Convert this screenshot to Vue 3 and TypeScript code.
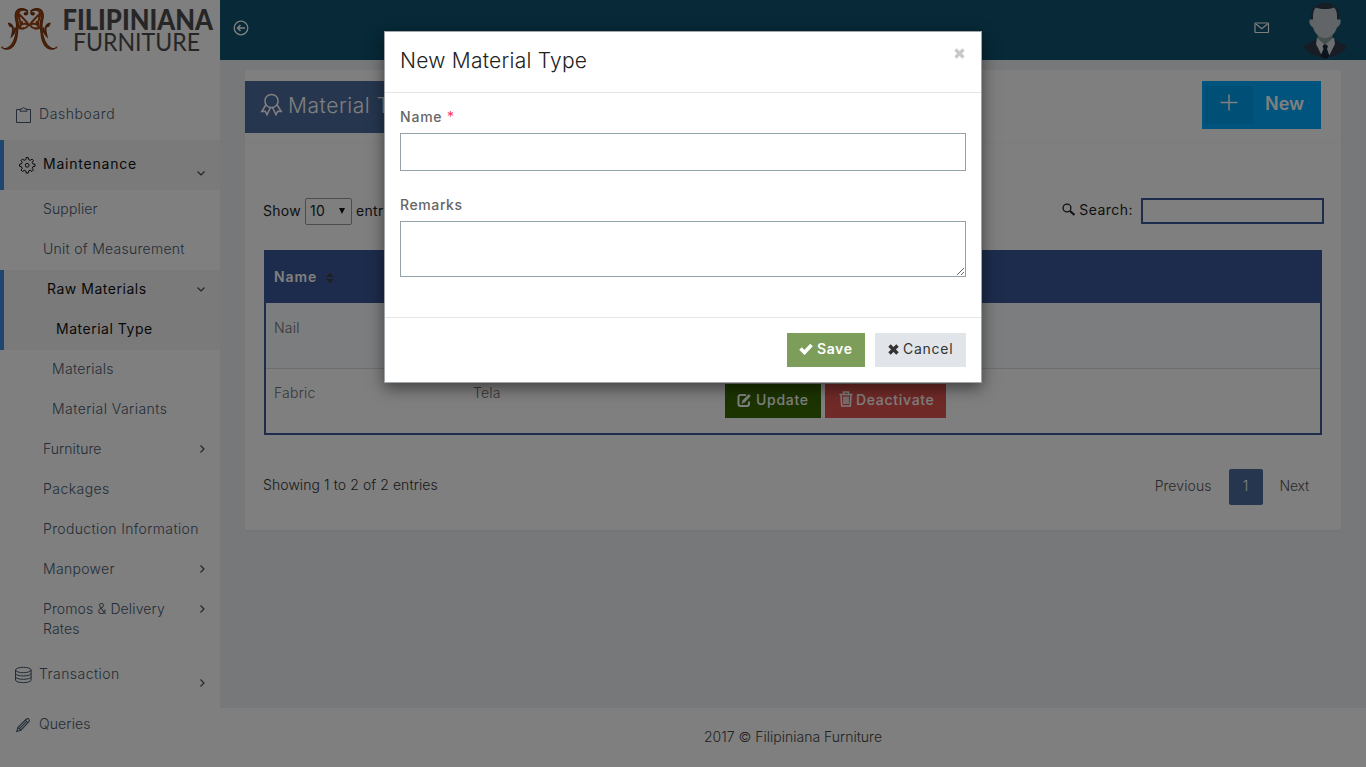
<script setup lang="ts">
interface NavItem {
  label: string
  kind: 'top' | 'sub' | 'deep'
  active?: boolean
  arrow?: 'down' | 'right'
  icon?: 'clipboard' | 'gear' | 'stack' | 'pencil'
  tracking: number
}

const nav: NavItem[] = [
  { label: 'Dashboard', kind: 'top', icon: 'clipboard', tracking: 0.57 },
  { label: 'Maintenance', kind: 'top', icon: 'gear', active: true, arrow: 'down', tracking: 0.78 },
  { label: 'Supplier', kind: 'sub', tracking: 0.14 },
  { label: 'Unit of Measurement', kind: 'sub', tracking: 0.27 },
  { label: 'Raw Materials', kind: 'sub', active: true, arrow: 'down', tracking: 0.52 },
  { label: 'Material Type', kind: 'deep', active: true, tracking: 0.52 },
  { label: 'Materials', kind: 'deep', tracking: 0.3 },
  { label: 'Material Variants', kind: 'deep', tracking: 0.44 },
  { label: 'Furniture', kind: 'sub', arrow: 'right', tracking: 0.05 },
  { label: 'Packages', kind: 'sub', tracking: 0.45 },
  { label: 'Production Information', kind: 'sub', tracking: 0.35 },
  { label: 'Manpower', kind: 'sub', arrow: 'right', tracking: 0.3 },
  { label: 'Promos & Delivery Rates', kind: 'sub', arrow: 'right', tracking: 0.13 },
  { label: 'Transaction', kind: 'top', icon: 'stack', arrow: 'right', tracking: 0.45 },
  { label: 'Queries', kind: 'top', icon: 'pencil', tracking: 0.12 },
]
</script>

<template>
  <div class="page">
    <aside class="sidebar">
      <svg class="logo" width="220" height="60" viewBox="0 0 220 60">
        <defs>
          <g id="scroll">
            <path d="M28 11C24 7 17 8 15.500 13c-1.500 4 1 8 1 12 0 8-1.500 15-5 19.500C9 47.500 6 49 3 48.500 9 51 14 47 16 41c2-6 1.500-12 2.500-16 .5-3-2.500-7-1-11 1.500-4 6.500-5 10.500-3z" fill="#a84a12" stroke="#7a340c" stroke-width="1.100" />
            <path d="M8 23.500c3 .5 5 3 5 6 0 2-.5 4-1 6 2-2 3.500-5 3-8 M12.500 27c-1-1-2.500-1.500-3.500-1" fill="none" stroke="#7a3510" stroke-width="1.800" />
            <path d="M19 12c-2 5 2 8 1.500 12M20 15c3 3 6 6 8.500 9.500-3-1-6-1-8 1-1.500 2 1 4 3 2.500M18 27c3 3 8 2 10.500-2M22 22l-2 4" fill="none" stroke="#9c4310" stroke-width="2" stroke-linecap="round" />
            <path d="M22 9.500c4 0 6 2 5.500 4-1 1.500-3 1-3-.5" fill="none" stroke="#7a3510" stroke-width="1.500" />
            <circle cx="25.500" cy="13.800" r="1.800" fill="#7a3510" />
            <circle cx="2.300" cy="47.500" r="1.100" fill="#9c4310" />
          </g>
        </defs>
        <use href="#scroll" />
        <use href="#scroll" transform="translate(58.500 0) scale(-1 1)" />
        <text class="logo-bold" x="62.500" y="30" textLength="150.500" lengthAdjust="spacingAndGlyphs">FILIPINIANA</text>
        <text class="logo-thin" x="73" y="51.300" textLength="127" lengthAdjust="spacingAndGlyphs">FURNITURE</text>
      </svg>

      <nav class="menu">
        <div v-for="item in nav" :key="item.label" class="item" :class="[item.kind, { active: item.active }]">
          <svg v-if="item.icon" class="item-icon" width="18" height="18" viewBox="0 0 18 18" fill="none" stroke="currentColor">
            <template v-if="item.icon === 'clipboard'">
              <path d="M5 3.500H1.500v13h14v-13h-3.500M5 5.200V3h1.900c.3-1.800 2.900-1.800 3.200 0H12v2.200z" />
            </template>
            <template v-else-if="item.icon === 'gear'">
              <path d="M7.200 1.500h2l.4 2.100 1.600.7 1.800-1.200 1.400 1.400-1.200 1.800.7 1.600 2.100.4v2l-2.100.4-.7 1.600 1.200 1.800-1.400 1.400-1.800-1.200-1.600.7-.4 2.100h-2l-.4-2.100-1.600-.7-1.800 1.200L2 14.100l1.200-1.800-.7-1.600-2.100-.4v-2l2.100-.4.7-1.600L2 4.500l1.400-1.400 1.800 1.200 1.600-.7z" />
              <circle cx="8.200" cy="9.300" r="1.900" />
            </template>
            <template v-else-if="item.icon === 'stack'">
              <ellipse cx="8.300" cy="4" rx="7.800" ry="2.700" />
              <path d="M.5 4v10c0 3.500 15.600 3.500 15.600 0V4M.5 7.300c0 3.500 15.600 3.500 15.600 0M.5 10.700c0 3.500 15.600 3.500 15.600 0" />
            </template>
            <template v-else>
              <path d="M1.800 15.500l1.200-4.200L11.500 3c1.500-1.200 3.700.8 2.600 2.500L5.900 14.200zM3 11.300l2.900 2.900M10.300 4.200l2.700 2.700M4.800 12.400l6.200-6.300" stroke-width="1.100" />
            </template>
          </svg>
          <span class="label" :style="{ letterSpacing: item.tracking + 'px' }">{{ item.label }}</span>
          <svg v-if="item.arrow" class="arrow" width="10" height="10" viewBox="0 0 10 10" fill="none" stroke="currentColor" stroke-width="1.100">
            <path :d="item.arrow === 'down' ? 'M1.500 3.500L5 7l3.500-3.500' : 'M3.500 1.500L7 5 3.500 8.500'" />
          </svg>
        </div>
      </nav>
    </aside>

    <div class="main">
      <header class="topbar">
        <svg class="back" width="16" height="16" viewBox="0 0 16 16" fill="none" stroke="#fff" stroke-width="1.300">
          <circle cx="8" cy="8" r="6.800" />
          <path d="M12 8H4.500M7.500 5L4.500 8l3 3" stroke-width="1.600" />
        </svg>
        <svg class="mail" width="16" height="12" viewBox="0 0 16 12" fill="none" stroke="#fff" stroke-width="1.200">
          <rect x="1" y="1" width="13.500" height="9.500" rx=".5" />
          <path d="M2 2l5.700 4.700L13.500 2" />
        </svg>
        <svg class="avatar" width="46" height="56" viewBox="0 0 46 56">
          <path d="M1 43.500l14-7.500h16l14 7.500C36 58 11 58 1 43.500z" fill="#303a4b" />
          <path d="M15 35l-1 6 7 14h5l7-14-1-6z" fill="#d9dde0" />
          <path d="M15.500 31h15v4.500L23 42l-7.500-6.500z" fill="#8f9c9c" />
          <path d="M20.500 43l2.500-2 3 2-1 3 2.500 7-2 2.500h-4.500l-2.500-2.500L21.500 46z" fill="#1b2738" />
          <path d="M9 17C7 6 14 0 23 0s16 6 14 17l-4 3H13z" fill="#303a4b" />
          <path d="M11 13c0-4 1-6.500 3-8.500 5 2 13 2 18 0 2 2 3 4.500 3 8.500v3.500h3.500c.7 3-.5 6.500-3.500 8C33 31 28 35 23 35S13 31 11 24.500c-3-1.500-4.200-5-3.500-8H11z" fill="#c4cbcf" />
        </svg>
      </header>

      <section class="panel">
        <div class="panel-head">
          <h1 class="title">
            <svg width="24" height="24" viewBox="0 0 24 24" fill="none" stroke="currentColor" stroke-width="1.500">
              <circle cx="11.500" cy="8" r="6.600" />
              <path d="M5.800 12L1.800 18.500l3.500-.3L7 21.700l3.500-7.200M17.200 12l4 6.500-3.500-.3-1.700 3.500-3.500-7.200" />
            </svg>
            <span>Material Type</span>
          </h1>
          <button class="new" type="button">
            <span class="plus">
              <svg width="18" height="18" viewBox="0 0 18 18" stroke="#fff" stroke-width="1.500"><path d="M9 .5v16M.5 8.500h17" /></svg>
            </span>
            <span class="new-text">New</span>
          </button>
        </div>

        <div class="tools">
          <div class="length">
            <span>Show</span>
            <span class="select"><span>10</span><i></i></span>
            <span>entries</span>
          </div>
          <div class="search">
            <svg width="14" height="14" viewBox="0 0 14 14" fill="none" stroke="#222">
              <circle cx="5" cy="5" r="3.900" stroke-width="1.300" />
              <path d="M8 8l4.500 4" stroke-width="2.200" />
            </svg>
            <span>Search:</span>
            <span class="search-box"></span>
          </div>
        </div>

        <div class="table">
          <div class="row thead">
            <span>Name<svg class="sort" width="10" height="12" viewBox="0 0 10 12" fill="#3c4048"><path d="M1 5l4-4.500L9 5zM1 7l4 4.500L9 7z" /></svg></span>
            <span>Remarks</span>
            <span>Actions</span>
          </div>
          <div class="row odd"><span>Nail</span><span></span><span></span></div>
          <div class="row">
            <span>Fabric</span>
            <span>Tela</span>
            <span class="actions">
              <button class="btn update" type="button">
                <svg width="15" height="15" viewBox="0 0 15 15" fill="none" stroke="currentColor"><path d="M9 2H3.500Q1.500 2 1.500 4v7q0 2 2 2h6.500q2 0 2-2V8.500" stroke-width="2" /><path d="M6 9l6.800-7" stroke-width="3" /><path d="M4.500 10.700l.6-2.500 2 1.900z" fill="currentColor" stroke="none" /></svg>
                <span>Update</span>
              </button>
              <button class="btn deactivate" type="button">
                <svg width="14" height="16" viewBox="0 0 14 16" fill="none" stroke="currentColor" stroke-width="1.500"><path d="M.5 3.500h13M4.500 3V1h5v2M2 4l.7 11h8.600L12 4M5 5.500v7.500M7 5.500v7.500M9 5.500v7.500" /></svg>
                <span>Deactivate</span>
              </button>
            </span>
          </div>
        </div>

        <div class="bottom">
          <span class="info">Showing 1 to 2 of 2 entries</span>
          <div class="pager"><span class="prev">Previous</span><b>1</b><span class="next">Next</span></div>
        </div>
      </section>

      <footer class="footer"><span>2017 © Filipiniana Furniture</span></footer>
    </div>
  </div>

  <div class="backdrop">
    <div class="modal" role="dialog">
      <div class="modal-head">
        <h2>New Material Type</h2>
        <svg width="11" height="11" viewBox="0 0 11 11" stroke="#c9c9c9" stroke-width="3.300"><path d="M1.500 1.500l8 8M9.500 1.500l-8 8" /></svg>
      </div>
      <div class="modal-body">
        <label class="name-label">Name <em>*</em></label>
        <input type="text" />
        <label class="remarks-label">Remarks</label>
        <textarea></textarea>
      </div>
      <div class="modal-foot">
        <button class="btn save" type="button">
          <svg width="14" height="12" viewBox="0 0 14 12" fill="none" stroke="#fff" stroke-width="3.600"><path d="M1.500 5.500l4 4L12.500 2" /></svg>
          <span>Save</span>
        </button>
        <button class="btn cancel" type="button">
          <svg width="11" height="11" viewBox="0 0 11 11" stroke="#333" stroke-width="3.400"><path d="M1.500 1.500l8 8M9.500 1.500l-8 8" /></svg>
          <span>Cancel</span>
        </button>
      </div>
    </div>
  </div>
</template>

<style>
body {
  margin: 0;
  overflow: hidden;
}
</style>

<style scoped>
.page,
.backdrop {
  font-family: Inter, "Open Sans", sans-serif;
  font-size: 14px;
  line-height: 20px;
}
.page {
  display: flex;
  height: 767px;
  background: #eef1f5;
}
button {
  font: inherit;
  border: 0;
}
svg {
  flex: none;
}
.sidebar {
  width: 220px;
  flex: none;
  background: #fff;
}
.logo {
  display: block;
}
.logo text {
  font-family: Lato, sans-serif;
  fill: #4c4c4e;
}
.logo .logo-bold {
  font-weight: 900;
  font-size: 28px;
}
.logo .logo-thin {
  font-weight: 400;
  font-size: 25px;
}
.menu {
  padding-top: 30px;
}
.item {
  box-sizing: border-box;
  position: relative;
  display: flex;
  min-height: 40px;
  padding: 9px 46px 11px 43px;
  color: #485a6e;
  font-weight: 300;
}
.item.top {
  height: 50px;
  padding: 14px 15px;
}
.item.deep {
  padding-left: 52px;
}
.item.sub .label {
  width: 158px;
  flex: none;
}
.item.top .label {
  margin-left: 6px;
}
.item.active {
  background: #f5f5f5;
  border-left: 4px solid #3c8cdc;
  color: #111;
  font-weight: 400;
}
.item-icon {
  margin-top: 2px;
}
.arrow {
  position: absolute;
  right: 13px;
  top: 15px;
  color: #444;
}
.active .arrow {
  right: 14.5px;
}
.item.top .arrow {
  top: 28px;
}
.item.sub .arrow {
  top: 14px;
}
.main {
  flex: 1;
  display: flex;
  flex-direction: column;
}
.topbar {
  box-sizing: border-box;
  height: 60px;
  display: flex;
  align-items: center;
  padding: 0 18px 0 13px;
  background: #0e5271;
}
.back {
  margin-top: -4px;
}
.mail {
  margin: -4px 32px 0 auto;
}
.avatar {
  margin-top: 2px;
}
.panel {
  box-sizing: border-box;
  height: 460px;
  margin: 10px 25px 0;
  background: #fff;
  box-shadow: 0 1px 2px #dfe3e8;
}
.panel-head {
  box-sizing: border-box;
  height: 73px;
  padding: 11px 20px 0 0;
  display: flex;
  justify-content: space-between;
  align-items: flex-start;
  border-bottom: 1px solid #f9f9fa;
}
.title {
  box-sizing: border-box;
  height: 52px;
  margin: 0;
  padding: 0 15px;
  display: flex;
  gap: 4px;
  align-items: center;
  background: #4b6d9c;
  color: #fff;
  font-size: 21px;
  font-weight: 300;
  letter-spacing: 0.55px;
}
.title svg {
  margin-top: -5px;
}
.title span {
  margin-top: -3px;
}
.new {
  width: 119px;
  height: 48px;
  padding: 5px 3px;
  display: flex;
  background: #00a8fc;
  color: #fff;
}
.plus {
  width: 48px;
  height: 38px;
  display: flex;
  align-items: center;
  justify-content: center;
  background: #009fee;
}
.plus svg {
  margin-top: -5px;
}
.new-text {
  margin: 8px 0 0 12px;
  font-size: 18px;
  font-weight: 600;
}
.tools {
  display: flex;
  justify-content: space-between;
  padding: 54px 17px 0 18px;
  height: 28px;
  color: #222;
}
.length,
.search {
  display: flex;
  align-items: center;
  letter-spacing: 0.3px;
}
.search {
  margin-top: -1px;
  height: 28px;
  letter-spacing: 0.45px;
}
.length {
  gap: 4px;
}
.select {
  box-sizing: border-box;
  width: 47px;
  height: 27px;
  display: flex;
  align-items: center;
  justify-content: space-between;
  padding: 0 6px 0 4px;
  border: 1px solid #999;
  border-radius: 2px;
}
.select i {
  border: 3.5px solid transparent;
  border-top: 6px solid #111;
  border-bottom: 0;
}
.search svg {
  margin-right: 3px;
}
.search-box {
  box-sizing: border-box;
  width: 183px;
  height: 26px;
  margin: 1px 0 0 8px;
  border: 2px solid #3b5998;
}
.table {
  margin: 25px 19px 0;
  border: 2px solid #3b5998;
}
.row {
  box-sizing: border-box;
  display: grid;
  grid-template-columns: 199px 252px 1fr;
  height: 64px;
  padding: 14px 8px 0;
  color: #6c7075;
  font-weight: 300;
  letter-spacing: 0.2px;
}
.row.thead {
  height: 51px;
  padding-top: 15px;
  background: #3b5998;
  color: #fff;
  font-weight: 600;
  letter-spacing: 0.9px;
}
.row.odd {
  height: 66px;
  padding-top: 15px;
  background: #f9fafd;
  border-bottom: 1px solid #d8dadf;
}
.sort {
  margin-left: 8px;
  vertical-align: -2px;
}
.actions {
  display: flex;
  gap: 4px;
  padding-top: 1px;
}
.btn {
  box-sizing: border-box;
  height: 34px;
  display: flex;
  align-items: center;
  padding: 0 12px 2px;
  gap: 4px;
  white-space: nowrap;
}
.actions .btn {
  color: #fff;
  font-weight: 500;
  letter-spacing: 0.7px;
}
.update {
  width: 96px;
  background: #366800;
}
.deactivate {
  width: 121px;
  background: #e05550;
}
.actions .deactivate {
  padding-left: 14px;
  gap: 3px;
}
.deactivate svg {
  margin-top: -2px;
}
.bottom {
  display: flex;
  justify-content: space-between;
  padding: 34px 32px 0 18px;
  letter-spacing: 0.08px;
}
.info {
  margin-top: 6px;
  color: #333;
  font-weight: 300;
}
.pager {
  display: flex;
  align-items: center;
  color: #555;
  font-weight: 300;
}
.prev,
.next {
  margin-top: -2px;
}
.next {
  letter-spacing: -0.2px;
}
.pager b {
  width: 34px;
  height: 36px;
  margin: 0 17px;
  border-radius: 2px;
  background: #4b6d9c;
  color: #fff;
  font-weight: 300;
  text-align: center;
  line-height: 34px;
}
.footer {
  box-sizing: border-box;
  height: 59px;
  margin-top: auto;
  padding-top: 19px;
  background: #fff;
  color: #444;
  font-weight: 300;
  text-align: center;
}
.backdrop {
  position: absolute;
  inset: 0;
  background: rgba(0, 0, 0, 0.5);
}
.modal {
  box-sizing: border-box;
  width: 598px;
  height: 352px;
  margin: 31px 0 0 384px;
  background: #fff;
  border: 1px solid #a0a5a9;
  box-shadow: 0 5px 15px rgba(0, 0, 0, 0.5);
}
.modal-head {
  box-sizing: border-box;
  height: 61px;
  padding: 15px 16px 0 15px;
  display: flex;
  justify-content: space-between;
  border-bottom: 1px solid #e5e5e5;
}
h2 {
  margin: 0;
  color: #222;
  font-size: 21px;
  font-weight: 300;
  line-height: 28px;
  letter-spacing: 0.25px;
}
.modal-head svg {
  margin-top: 1px;
}
.modal-body {
  box-sizing: border-box;
  height: 224px;
  padding: 14px 15px 0;
}
label {
  display: block;
  color: #666;
  font-weight: 500;
  letter-spacing: 0.6px;
}
label em {
  color: #f36;
  font-style: normal;
  font-weight: 400;
}
.name-label {
  letter-spacing: 0.8px;
}
.remarks-label {
  margin-top: 24px;
}
input,
textarea {
  box-sizing: border-box;
  display: block;
  width: 100%;
  margin: 6px 0 0;
  border: 1px solid #93a1ab;
  background: #fff;
}
input {
  height: 38px;
}
textarea {
  height: 56px;
}
.modal-foot {
  display: flex;
  justify-content: flex-end;
  gap: 10px;
  padding: 15px 15px 0;
  border-top: 1px solid #e5e5e5;
}
.save {
  width: 78px;
  background: #7d9d5b;
  color: #fff;
  font-weight: 600;
  letter-spacing: 0.6px;
}
.cancel {
  width: 91px;
  padding-left: 13px;
  background: #e1e5e9;
  color: #333;
  letter-spacing: 0.75px;
}
</style>
